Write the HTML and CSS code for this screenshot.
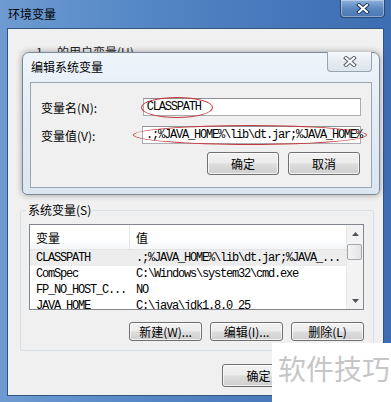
FILE: index.html
```html
<!DOCTYPE html>
<html lang="zh-CN">

<head>
    <meta charset="UTF-8">
    <meta name="viewport" content="width=device-width, initial-scale=1.0">
    <title>环境变量</title>
    <link rel="stylesheet" href="styles.css">
</head>

<body>
    <div class="window">
        <div class="titlebar">
            <span class="title">环境变量</span>
            <div class="close close-outer">
                <svg width="14" height="11" viewBox="0 0 14 11">
                    <path d="M3 2 L11 9 M11 2 L3 9" stroke="#1f3a5e" stroke-width="4" stroke-linecap="square" fill="none"/>
                    <path d="M3 2 L11 9 M11 2 L3 9" stroke="#fff" stroke-width="2" stroke-linecap="square" fill="none"/>
                </svg>
            </div>
        </div>

        <div class="content">
            <div class="user-label"><span class="user-name">1</span>的用户变量(U)</div>

            <fieldset class="group">
                <legend>系统变量(S)</legend>
                <div class="list">
                    <div class="list-main">
                        <div class="list-head">
                            <div class="col1">变量</div>
                            <div class="col2">值</div>
                        </div>
                        <div class="row selected">
                            <div class="col1 mono">CLASSPATH</div>
                            <div class="col2 mono">.;%JAVA_HOME%\lib\dt.jar;%JAVA_...</div>
                        </div>
                        <div class="row">
                            <div class="col1 mono">ComSpec</div>
                            <div class="col2 mono">C:\Windows\system32\cmd.exe</div>
                        </div>
                        <div class="row">
                            <div class="col1 mono">FP_NO_HOST_C...</div>
                            <div class="col2 mono">NO</div>
                        </div>
                        <div class="row">
                            <div class="col1 mono">JAVA_HOME</div>
                            <div class="col2 mono">C:\java\jdk1.8.0_25</div>
                        </div>
                    </div>
                    <div class="scrollbar">
                        <div class="arrow">
                            <svg width="7" height="4" viewBox="0 0 7 4"><polygon points="0,4 3.5,0 7,4" fill="#4d5259"/></svg>
                        </div>
                        <div class="thumb"></div>
                        <div class="track"></div>
                        <div class="arrow">
                            <svg width="7" height="4" viewBox="0 0 7 4"><polygon points="0,0 3.5,4 7,0" fill="#4d5259"/></svg>
                        </div>
                    </div>
                </div>
                <div class="btn-row">
                    <div class="btn small">新建(W)...</div>
                    <div class="btn small">编辑(I)...</div>
                    <div class="btn small">删除(L)</div>
                </div>
            </fieldset>

            <div class="footer">
                <div class="btn big">确定</div>
                <div class="btn big">取消</div>
            </div>
        </div>

        <!-- dialog on top of the main window -->
        <div class="dialog">
            <div class="dialog-head">
                <span class="dialog-title">编辑系统变量</span>
                <div class="close close-inner">
                    <svg width="14" height="11" viewBox="0 0 14 11">
                        <path d="M3 2 L11 9 M11 2 L3 9" stroke="#5a626c" stroke-width="4" stroke-linecap="square" fill="none"/>
                        <path d="M3 2 L11 9 M11 2 L3 9" stroke="#fff" stroke-width="2" stroke-linecap="square" fill="none"/>
                    </svg>
                </div>
            </div>
            <div class="dialog-body">
                <div class="field">
                    <span class="label">变量名(N):</span>
                    <div class="input mono">CLASSPATH<span class="ring ring1"></span></div>
                </div>
                <div class="field">
                    <span class="label">变量值(V):</span>
                    <div class="input mono">.;%JAVA_HOME%\lib\dt.jar;%JAVA_HOME%<span class="ring ring2"></span></div>
                </div>
                <div class="dialog-btns">
                    <div class="btn mid">确定</div>
                    <div class="btn mid">取消</div>
                </div>
            </div>
        </div>

        <div class="watermark">软件技巧</div>
    </div>
</body>

</html>
```

FILE: styles.css
```css
* {
    box-sizing: border-box;
}

html,
body {
    margin: 0;
    padding: 0;
}

body {
    width: 391px;
    height: 402px;
    overflow: hidden;
    font-family: "Noto Sans CJK SC", sans-serif;
    font-size: 12px;
    color: #000;
}

.mono {
    font-family: "Liberation Mono", "Noto Sans CJK SC", monospace;
    font-size: 12px;
    letter-spacing: -1.2px;
}

/* ---------- main window ---------- */

.window {
    position: relative;
    height: 402px;
    display: flex;
    flex-direction: column;
    padding: 0 7px 6px 7px;
    background: linear-gradient(90deg, #6e9bd1 0%, #5588c6 35%, #4778bb 70%, #3d6db2 100%);
}

.titlebar {
    height: 28px;
    display: flex;
    justify-content: space-between;
    align-items: flex-start;
}

.title {
    margin: 7px 0 0 1px;
    line-height: 14px;
}

.close {
    display: flex;
    align-items: center;
    justify-content: center;
    border-radius: 0 0 4px 4px;
}

.close-outer {
    width: 45px;
    height: 18px;
    margin-right: -1px;
    border: 1px solid #2b4a74;
    border-top: none;
    background: linear-gradient(#8fb2dc, #5c88c0 50%, #4a78b4);
    box-shadow: inset 0 0 0 1px rgba(255, 255, 255, 0.35);
}

.content {
    flex: 1;
    display: flex;
    flex-direction: column;
    background: #f0f0f0;
    border: 1px solid #33547d;
    padding: 17px 9px 0 12px;
}

.user-label {
    height: 158px;
    line-height: 12px;
    padding-left: 3px;
    color: #222;
}

.user-name {
    display: inline-block;
    width: 34px;
    padding-left: 13px;
}

.group {
    margin: 0;
    padding: 8px 9px 9px 8px;
    border: 1px solid #d5dfe5;
    border-radius: 3px;
}

.group legend {
    margin-left: -3px;
    padding: 0 2px;
    line-height: 12px;
}

/* ---------- list view ---------- */

.list {
    height: 86px;
    display: flex;
    border: 1px solid #828790;
    background: #fff;
}

.list-main {
    flex: 1;
    overflow: hidden;
}

.list-head {
    height: 25px;
    display: flex;
    align-items: center;
    background: linear-gradient(#fff, #fff 60%, #f4f6f8);
    border-bottom: 1px solid #e5e5e5;
}

.list-head .col1 {
    height: 25px;
    line-height: 25px;
    border-right: 1px solid #e3e5e8;
}

.col1 {
    width: 100px;
    padding-left: 6px;
    white-space: nowrap;
}

.col2 {
    flex: 1;
    padding-left: 6px;
    white-space: nowrap;
}

.row {
    height: 16px;
    display: flex;
    align-items: center;
    line-height: 16px;
}

.row.selected {
    background: #ededed;
}

.scrollbar {
    width: 17px;
    display: flex;
    flex-direction: column;
    background: #f3f3f3;
    border-left: 1px solid #e8e8e8;
}

.arrow {
    height: 17px;
    display: flex;
    align-items: center;
    justify-content: center;
}

.thumb {
    height: 16px;
    margin: 2px 1px 0 0;
    border: 1px solid #a3a7ad;
    border-radius: 2px;
    background: linear-gradient(90deg, #f4f4f4, #e4e4e4);
}

.track {
    flex: 1;
}

/* ---------- buttons ---------- */

.btn {
    display: flex;
    align-items: center;
    justify-content: center;
    border: 1px solid #707070;
    border-radius: 3px;
    background: linear-gradient(#f3f3f3, #ebebeb 48%, #dddddd 52%, #cfcfcf);
    box-shadow: inset 0 0 0 1px rgba(255, 255, 255, 0.7);
    white-space: nowrap;
}

.btn.small {
    width: 73px;
    height: 19px;
}

.btn.mid {
    width: 72px;
    height: 23px;
}

.btn.big {
    width: 73px;
    height: 23px;
}

.btn-row {
    display: flex;
    justify-content: flex-end;
    gap: 8px;
    margin-top: 12px;
}

.footer {
    display: flex;
    justify-content: flex-end;
    gap: 8px;
    margin: 13px -2px 0 0;
}

/* ---------- edit dialog ---------- */

.dialog {
    position: absolute;
    left: 22px;
    top: 52px;
    width: 358px;
    height: 143px;
    display: flex;
    flex-direction: column;
    padding: 0 7px 6px 7px;
    border: 1px solid #7d8896;
    border-radius: 7px 7px 5px 5px;
    background: linear-gradient(#eef4fa, #e4edf6 40%, #dbe6f1);
    box-shadow: 0 0 6px rgba(0, 0, 0, 0.35);
}

.dialog-head {
    height: 29px;
    display: flex;
    justify-content: space-between;
    align-items: flex-start;
}

.dialog-title {
    margin: 7px 0 0 1px;
    line-height: 14px;
}

.close-inner {
    width: 45px;
    height: 20px;
    margin-top: -1px;
    border: 1px solid #98a3b0;
    border-top: none;
    background: linear-gradient(#f6f8fb, #e6ecf2 50%, #dde5ed);
}

.dialog-body {
    flex: 1;
    border: 1px solid #9aa6b3;
    background: #f0f0f0;
    padding: 15px 10px 0 10px;
}

.field {
    display: flex;
    align-items: center;
    margin-bottom: 10px;
}

.label {
    width: 102px;
}

.input {
    position: relative;
    width: 219px;
    height: 18px;
    line-height: 16px;
    padding-left: 3px;
    border: 1px solid #abadb3;
    border-top-color: #8e9197;
    background: #fff;
    white-space: nowrap;
}

.ring {
    position: absolute;
    border: 1px solid #c2393b;
    border-radius: 50%;
}

.ring1 {
    left: -3px;
    top: -2px;
    width: 72px;
    height: 21px;
}

.ring2 {
    left: -10px;
    top: -2px;
    width: 234px;
    height: 20px;
}

.dialog-btns {
    display: flex;
    justify-content: flex-end;
    gap: 9px;
    margin: -2px 1px 0 0;
}

/* ---------- watermark ---------- */

.watermark {
    position: absolute;
    left: 272px;
    top: 343px;
    right: 0;
    bottom: 0;
    padding: 8px 0 0 6px;
    background: #fff;
    color: #c6c6c6;
    font-size: 28px;
    line-height: 34px;
    white-space: nowrap;
    overflow: hidden;
}
```
